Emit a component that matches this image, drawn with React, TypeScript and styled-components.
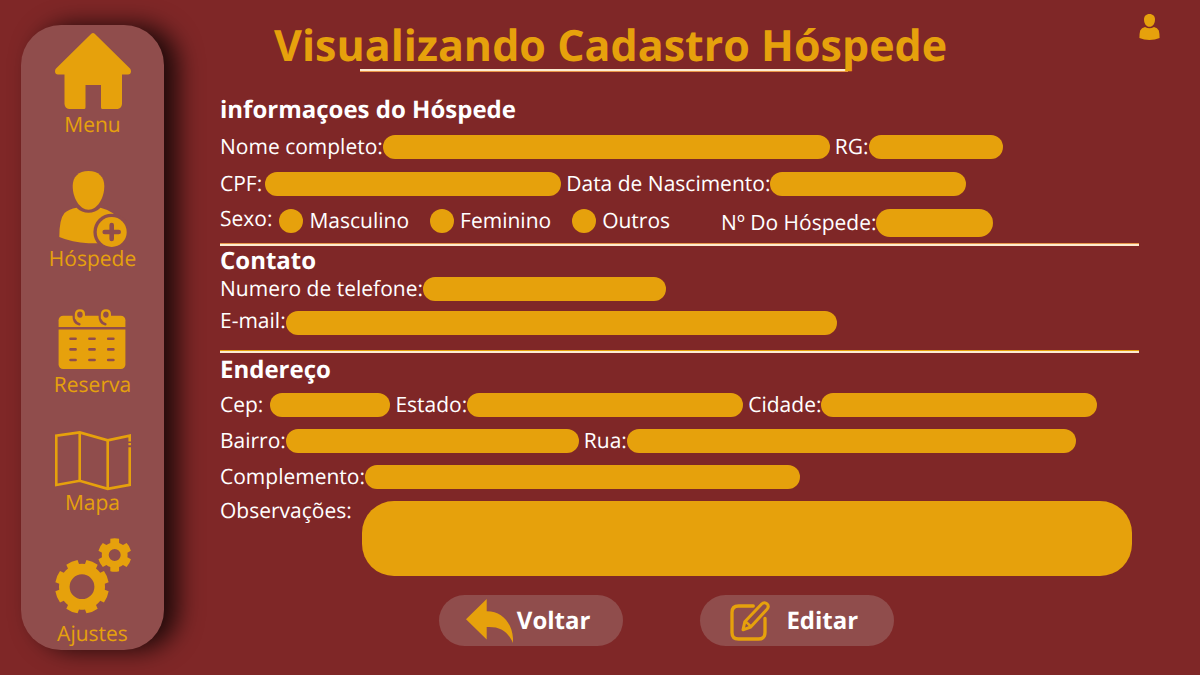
import React from "react";
import styled, { createGlobalStyle } from "styled-components";

const color = {
  page: "#7f2727",
  panel: "#904d4c",
  gold: "#e6a10c",
  text: "#ffffff",
  rule: "#fdebd0",
};

const GlobalStyle = createGlobalStyle`
  *, *::before, *::after { box-sizing: border-box; }
  body {
    margin: 0;
    background: ${color.page};
    color: ${color.text};
    font-family: "Open Sans", "Noto Sans", sans-serif;
    text-rendering: geometricPrecision;
  }
`;

const Page = styled.div`
  display: flex;
  min-height: 100vh;
`;

const Sidebar = styled.nav`
  display: flex;
  flex-direction: column;
  align-items: center;
  flex: 0 0 143px;
  margin: 25px 0 25px 21px;
  padding: 8px 0 4px;
  border-radius: 40px;
  background: ${color.panel};
  box-shadow: 14px 0 24px rgba(0, 0, 0, 0.76);
`;

const NavLink = styled.a<{ $before: number; $labelGap: number }>`
  display: flex;
  flex-direction: column;
  align-items: center;
  gap: ${(p) => p.$labelGap}px;
  margin-top: ${(p) => p.$before}px;
  color: ${color.gold};
  font-size: 21px;
  line-height: 24px;
  text-decoration: none;
`;

const Main = styled.main`
  flex: 1;
  min-width: 0;
  padding: 14px 40px 28px 56px;
`;

const Header = styled.header`
  display: flex;
  justify-content: space-between;
  align-items: flex-start;
  padding-left: 54px;
`;

const Title = styled.h1`
  position: relative;
  z-index: 0;
  margin: 0;
  color: ${color.gold};
  font-size: 43px;
  line-height: 62px;
  font-weight: 700;

  &::after {
    content: "";
    position: absolute;
    z-index: -1;
    left: 86px;
    right: 99px;
    bottom: 4px;
    height: 3px;
    background: ${color.rule};
    border-bottom: 1px solid #e8964a;
  }
`;

const ProfileButton = styled.button`
  display: flex;
  padding: 0;
  border: 0;
  background: none;
  color: ${color.gold};
`;

const Form = styled.form`
  padding-right: 21px;
`;

const Section = styled.section<{ $top: number }>`
  padding-top: ${(p) => p.$top}px;
`;

const SectionTitle = styled.h2`
  margin: 0;
  font-size: 24px;
  line-height: 28px;
  font-weight: 700;
`;

const Rows = styled.div<{ $top: number; $gap: number }>`
  display: flex;
  flex-direction: column;
  gap: ${(p) => p.$gap}px;
  margin-top: ${(p) => p.$top}px;
`;

const Row = styled.div`
  display: flex;
  align-items: flex-start;
  gap: 5px;
`;

const Divider = styled.hr<{ $top: number; $accent: string }>`
  height: 3px;
  margin: ${(p) => p.$top}px 0 0;
  border: 0;
  border-top: 1px solid ${(p) => p.$accent};
  background: ${color.rule};
`;

const FieldBox = styled.div<{ $width: number; $gap: number; $raised: boolean }>`
  display: flex;
  align-items: ${(p) => (p.$raised ? "flex-start" : "center")};
  flex: 0 1 auto;
  min-width: 0;
  gap: ${(p) => p.$gap}px;

  input {
    flex: 0 1 ${(p) => p.$width}px;
    width: ${(p) => p.$width}px;
  }
`;

const Label = styled.label<{ $raised?: boolean }>`
  flex: none;
  font-size: 21px;
  line-height: ${(p) => (p.$raised ? 20 : 24)}px;
  white-space: nowrap;
`;

const Input = styled.input<{ $height: number }>`
  min-width: 0;
  height: ${(p) => p.$height}px;
  padding: 0 12px;
  border: 0;
  border-radius: 14px;
  background: ${color.gold};
  color: ${color.page};
  font: inherit;
  font-size: 16px;
`;

const NotesBox = styled.div`
  display: flex;
  align-items: flex-start;
  gap: 10px;
  padding-right: 7px;
`;

const Notes = styled.textarea`
  flex: 1;
  min-width: 0;
  height: 75px;
  padding: 12px 24px;
  border: 0;
  border-radius: 32px;
  background: ${color.gold};
  color: ${color.page};
  font: inherit;
  font-size: 16px;
  resize: none;
`;

const Choices = styled.fieldset`
  display: flex;
  gap: 21px;
  margin: 0;
  padding: 0;
  border: 0;
`;

const Choice = styled.div`
  display: flex;
  gap: 6px;
`;

const Radio = styled.input`
  appearance: none;
  width: 24px;
  height: 24px;
  margin: 0;
  border-radius: 50%;
  background: ${color.gold};
`;

const SexRow = styled.div`
  display: flex;
  align-items: flex-start;
  gap: 7px;
  margin-right: 46px;
`;

const Actions = styled.div`
  display: flex;
  justify-content: center;
  gap: 77px;
  padding: 19px 26px 0 0;
`;

const ActionButton = styled.button<{ $gap: number; $side: number }>`
  display: flex;
  align-items: center;
  gap: ${(p) => p.$gap}px;
  height: 51px;
  padding: 0 ${(p) => p.$side + 6}px 0 ${(p) => p.$side}px;
  border: 0;
  border-radius: 26px;
  background: ${color.panel};
  color: ${color.text};
  font: inherit;
  font-size: 24px;
  font-weight: 700;
  text-rendering: inherit;

  svg { color: ${color.gold}; }
`;

function gearPath(
  cx: number, cy: number, outer: number, root: number, hole: number,
  teeth: number, outerHalf: number, rootHalf: number, start: number,
) {
  const at = (r: number, deg: number) => {
    const a = (deg * Math.PI) / 180;
    return `${(cx + r * Math.cos(a)).toFixed(2)} ${(cy + r * Math.sin(a)).toFixed(2)}`;
  };
  const step = 360 / teeth;
  let d = "";
  for (let i = 0; i < teeth; i++) {
    const c = start + i * step;
    d += `${i === 0 ? "M" : `A${root} ${root} 0 0 1 `}${at(root, c - rootHalf)}`;
    d += `L${at(outer, c - outerHalf)}A${outer} ${outer} 0 0 1 ${at(outer, c + outerHalf)}`;
    d += `L${at(root, c + rootHalf)}`;
  }
  d += `A${root} ${root} 0 0 1 ${at(root, start - rootHalf)}Z`;
  d += `M${cx + hole} ${cy}A${hole} ${hole} 0 1 0 ${cx - hole} ${cy}A${hole} ${hole} 0 1 0 ${cx + hole} ${cy}Z`;
  return d;
}

const HomeIcon = () => (
  <svg width="76" height="76" viewBox="0 0 76 76" fill="currentColor" aria-hidden="true">
    <path d="M36.300 .7Q38-.7 39.700 .7L75 35.500Q76 36.500 76 38.500Q75.800 41.500 73 41.500H67V71Q66.500 75.500 62.500 76H47.500Q46 76 46 74.500V52H30.500V74.500Q30.500 76 29 76H14Q10 75.500 9.500 71V41.500H3Q.2 41.500 0 38.500Q0 36.500 1 35.500Z" />
  </svg>
);

const GuestIcon = () => (
  <svg width="68" height="76" viewBox="0 0 68 76" fill="currentColor" aria-hidden="true">
    <path d="M29.500 0C39.500 0 45.300 6 45.300 15C45.300 27 38.500 38.700 29.500 38.700C20.500 38.700 13.700 27 13.700 15C13.700 6 19.500 0 29.500 0Z" />
    <path d="M17.500 36.700C24 43.300 35 43.300 41.500 36.700Q49 38.500 54.500 42.500L52 72Q41 72.500 29.500 72.200Q13 71.500 .3 66Q.3 48 5.500 42Q10 38 17.500 36.700Z" />
    <circle cx="52.700" cy="61" r="18.300" fill={color.panel} />
    <circle cx="52.700" cy="61" r="15" />
    <path d="M52.700 54V68M45.700 61H59.700" stroke={color.panel} strokeWidth="4.600" strokeLinecap="round" />
  </svg>
);

const CalendarIcon = () => (
  <svg width="68" height="60" viewBox="0 0 68 60" fill="currentColor" aria-hidden="true">
    <rect x=".6" y="6.700" width="66.800" height="53.300" rx="4.500" />
    <path d="M0 19.300H68" stroke={color.panel} strokeWidth="2.400" />
    {[0, 26].map((x) => (
      <g key={x} transform={`translate(${x} 0)`} fill="none" strokeLinecap="round">
        <path d="M15.800 6C15.600 11 17.500 14.500 21.300 15.300" stroke={color.panel} strokeWidth="2.600" />
        <path d="M22 4.500V6" stroke={color.panel} strokeWidth="5.400" />
        <path d="M18 9V5.200Q18.200 1.400 22 1.400Q25.800 1.400 25.800 5.200V7.500" stroke={color.gold} strokeWidth="2.400" />
      </g>
    ))}
    <path
      d="M12.500 29.700H17.600M31.400 29.700H36.600M50.200 29.700H55.400M12.500 40.400H17.600M31.400 40.400H36.600M50.200 40.400H55.400M12.500 51H17.600M31.400 51H36.600M50.200 51H55.400"
      stroke={color.panel}
      strokeWidth="2.600"
      strokeLinecap="round"
    />
  </svg>
);

const MapIcon = () => (
  <svg width="76" height="60" viewBox="0 0 76 60" fill="none" stroke="currentColor" strokeWidth="2.600" aria-hidden="true">
    <path d="M74.700 10.500V4.700L52.700 9.300L24.700 1.400L1.300 4.700V54L24.700 49.800L52.700 57.800L74.700 53.800V16.300" />
    <path d="M24.700 1.400V49.800M52.700 9.300V57.800M74.700 12V14.300" />
  </svg>
);

const GearsIcon = () => (
  <svg width="76" height="76" viewBox="0 0 76 76" fill="currentColor" aria-hidden="true">
    <path d={gearPath(27, 48.7, 27, 23, 12.4, 8, 13, 15, 22.5)} />
    <path d={gearPath(59.7, 17, 16.8, 12.9, 6, 6, 15, 20, 30)} />
  </svg>
);

const UserIcon = () => (
  <svg width="21" height="26" viewBox="0 0 21 26" fill="currentColor" aria-hidden="true">
    <path d="M10.500 0C14 0 16 2.300 16 5.500C16 9.500 13.800 12.800 10.500 12.800C7.200 12.800 5 9.500 5 5.500C5 2.300 7 0 10.500 0Z" />
    <path d="M6 13Q10.500 15.500 15 13Q18.500 13.500 19.800 16.500Q20.600 19.500 20.600 24Q16 26 10.500 26Q5 26 .4 24Q.4 19.500 1.200 16.500Q2.500 13.500 6 13Z" />
  </svg>
);

const BackIcon = () => (
  <svg width="47" height="44" viewBox="0 0 47 44" fill="currentColor" aria-hidden="true">
    <path d="M0 20.200L20.700 0V12.200C37 12 48 26 47 44C41.500 32 34 27.300 20.700 28V40.400Z" />
  </svg>
);

const EditIcon = () => (
  <svg width="40" height="40" viewBox="0 0 40 40" fill="none" stroke="currentColor" strokeWidth="3.300" strokeLinecap="round" strokeLinejoin="round" aria-hidden="true">
    <path d="M23.300 5H8.500Q2 5 2 11.500V31.500Q2 38 8.500 38H28.500Q35 38 35 31.500V17.300" />
    <path strokeWidth="3" d="M13 28.800L14.800 20.800L31.700 3Q34.500 .5 37 2.800Q39.500 5.300 37 8.200L20.700 26Z" />
    <path strokeWidth="2.400" d="M15.500 20.500L21 25.500" />
  </svg>
);

const navItems = [
  { label: "Menu", Icon: HomeIcon, before: 0, labelGap: 4 },
  { label: "Hóspede", Icon: GuestIcon, before: 34, labelGap: 0 },
  { label: "Reserva", Icon: CalendarIcon, before: 38, labelGap: 4 },
  { label: "Mapa", Icon: MapIcon, before: 34, labelGap: 0 },
  { label: "Ajustes", Icon: GearsIcon, before: 23, labelGap: 8 },
];

type FieldProps = {
  id: string;
  label: string;
  width: number;
  gap?: number;
  height?: number;
  raised?: boolean;
  type?: string;
};

const Field = ({ id, label, width, gap = 0, height = 24, raised = false, type = "text" }: FieldProps) => (
  <FieldBox $width={width} $gap={gap} $raised={raised}>
    <Label htmlFor={id} $raised={raised}>{label}</Label>
    <Input id={id} type={type} $height={height} readOnly />
  </FieldBox>
);

export default function App() {
  return (
    <>
      <GlobalStyle />
      <Page>
        <Sidebar>
          {navItems.map(({ label, Icon, before, labelGap }) => (
            <NavLink key={label} href="#" $before={before} $labelGap={labelGap}>
              <Icon />
              {label}
            </NavLink>
          ))}
        </Sidebar>
        <Main>
          <Header>
            <Title>Visualizando Cadastro Hóspede</Title>
            <ProfileButton type="button" aria-label="Perfil">
              <UserIcon />
            </ProfileButton>
          </Header>
          <Form>
            <Section $top={20}>
              <SectionTitle>informaçoes do Hóspede</SectionTitle>
              <Rows $top={11} $gap={13}>
                <Row>
                  <Field id="nome" label="Nome completo:" width={447} />
                  <Field id="rg" label="RG:" width={134} />
                </Row>
                <Row>
                  <Field id="cpf" label="CPF:" width={296} gap={3} />
                  <Field id="nascimento" label="Data de Nascimento:" width={196} />
                </Row>
                <Row>
                  <SexRow>
                    <Label as="span" id="sexo" $raised>Sexo:</Label>
                    <Choices aria-labelledby="sexo">
                      {["Masculino", "Feminino", "Outros"].map((name) => (
                        <Choice key={name}>
                          <Radio type="radio" name="sexo" id={name} />
                          <Label htmlFor={name}>{name}</Label>
                        </Choice>
                      ))}
                    </Choices>
                  </SexRow>
                  <Field id="numero" label="Nº Do Hóspede:" width={117} height={28} />
                </Row>
              </Rows>
            </Section>
            <Divider $top={6} $accent="#e8964a" />
            <Section $top={1}>
              <SectionTitle>Contato</SectionTitle>
              <Rows $top={2} $gap={10}>
                <Field id="telefone" label="Numero de telefone:" width={243} />
                <Field id="email" label="E-mail:" width={551} raised />
              </Rows>
            </Section>
            <Divider $top={15} $accent={color.gold} />
            <Section $top={3}>
              <SectionTitle>Endereço</SectionTitle>
              <Rows $top={9} $gap={12}>
                <Row>
                  <Field id="cep" label="Cep:" width={120} gap={7} />
                  <Field id="estado" label="Estado:" width={276} />
                  <Field id="cidade" label="Cidade:" width={276} />
                </Row>
                <Row>
                  <Field id="bairro" label="Bairro:" width={293} />
                  <Field id="rua" label="Rua:" width={449} />
                </Row>
                <Field id="complemento" label="Complemento:" width={435} />
                <NotesBox>
                  <Label htmlFor="observacoes" $raised>Observações:</Label>
                  <Notes id="observacoes" readOnly />
                </NotesBox>
              </Rows>
            </Section>
            <Actions>
              <ActionButton type="button" $gap={4} $side={27}>
                <BackIcon />
                Voltar
              </ActionButton>
              <ActionButton type="button" $gap={16} $side={30}>
                <EditIcon />
                Editar
              </ActionButton>
            </Actions>
          </Form>
        </Main>
      </Page>
    </>
  );
}
